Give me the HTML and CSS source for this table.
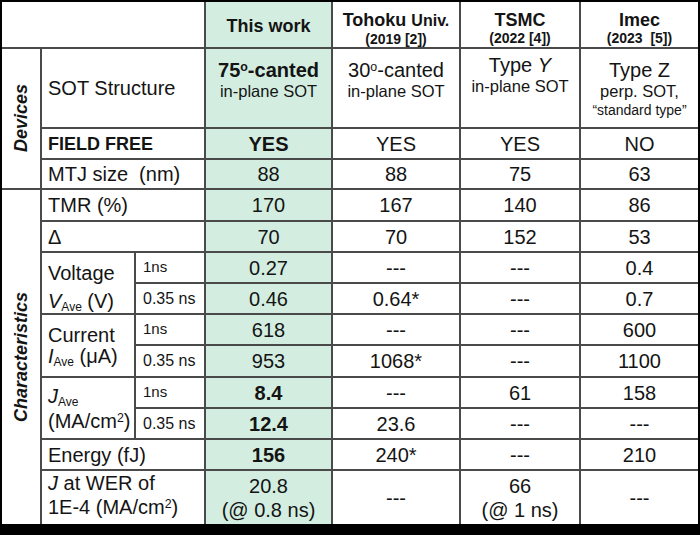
FILE: index.html
```html
<!DOCTYPE html>
<html>
<head>
<meta charset="utf-8">
<link rel="stylesheet" href="styles.css">
</head>
<body>
<div class="grid">
  <div class="c hdr-empty"></div>
  <div class="c g hdr-main">This work</div>
  <div class="c hdr"><div class="h1">Tohoku <span class="univ">Univ.</span></div><div class="h2">(2019 [2])</div></div>
  <div class="c hdr"><div class="h1">TSMC</div><div class="h2">(2022 [4])</div></div>
  <div class="c hdr"><div class="h1">Imec</div><div class="h2">(2023&nbsp; [5])</div></div>

  <div class="c rot rot-dev"><span>Devices</span></div>
  <div class="c lab span2">SOT Structure</div>
  <div class="c g top"><div class="l20 b">75<span class="sup">o</span>-canted</div><div class="l16">in-plane SOT</div></div>
  <div class="c top"><div class="l20">30<span class="sup">o</span>-canted</div><div class="l16">in-plane SOT</div></div>
  <div class="c top top-tsmc"><div class="l20">Type <i>Y</i></div><div class="l16">in-plane SOT</div></div>
  <div class="c top"><div class="l20">Type Z</div><div class="l16">perp. SOT,</div><div class="l13">“standard type”</div></div>

  <div class="c lab span2 b ff">FIELD FREE</div>
  <div class="c g b">YES</div>
  <div class="c">YES</div>
  <div class="c">YES</div>
  <div class="c">NO</div>

  <div class="c lab span2">MTJ size&nbsp; (nm)</div>
  <div class="c g">88</div>
  <div class="c">88</div>
  <div class="c">75</div>
  <div class="c">63</div>

  <div class="c rot rot-char"><span>Characteristics</span></div>
  <div class="c lab span2">TMR (%)</div>
  <div class="c g">170</div>
  <div class="c">167</div>
  <div class="c">140</div>
  <div class="c">86</div>

  <div class="c lab span2">Δ</div>
  <div class="c g">70</div>
  <div class="c">70</div>
  <div class="c">152</div>
  <div class="c">53</div>

  <div class="c lab rspan2 multi volt"><div>Voltage</div><div><i>V</i><span class="sub">Ave</span> (V)</div></div>
  <div class="c sc sc1">1ns</div>
  <div class="c g">0.27</div>
  <div class="c">---</div>
  <div class="c">---</div>
  <div class="c">0.4</div>

  <div class="c sc">0.35 ns</div>
  <div class="c g">0.46</div>
  <div class="c">0.64*</div>
  <div class="c">---</div>
  <div class="c">0.7</div>

  <div class="c lab rspan2 multi curr"><div>Current</div><div><i>I</i><span class="sub">Ave</span> (μA)</div></div>
  <div class="c sc sc1">1ns</div>
  <div class="c g">618</div>
  <div class="c">---</div>
  <div class="c">---</div>
  <div class="c">600</div>

  <div class="c sc">0.35 ns</div>
  <div class="c g">953</div>
  <div class="c">1068*</div>
  <div class="c">---</div>
  <div class="c">1100</div>

  <div class="c lab rspan2 multi jave"><div><i>J</i><span class="sub">Ave</span></div><div>(MA/cm<span class="sup">2</span>)</div></div>
  <div class="c sc sc1">1ns</div>
  <div class="c g b">8.4</div>
  <div class="c">---</div>
  <div class="c">61</div>
  <div class="c">158</div>

  <div class="c sc">0.35 ns</div>
  <div class="c g b">12.4</div>
  <div class="c">23.6</div>
  <div class="c">---</div>
  <div class="c">---</div>

  <div class="c lab span2">Energy (fJ)</div>
  <div class="c g b">156</div>
  <div class="c">240*</div>
  <div class="c">---</div>
  <div class="c">210</div>

  <div class="c lab span2 multi wer"><div><i>J</i> at WER of</div><div>1E-4 (MA/cm<span class="sup">2</span>)</div></div>
  <div class="c g multi wer"><div>20.8</div><div>(@ 0.8 ns)</div></div>
  <div class="c">---</div>
  <div class="c multi wer"><div>66</div><div>(@ 1 ns)</div></div>
  <div class="c">---</div>
</div>
</body>
</html>
```

FILE: styles.css
```css
html, body {
  margin: 0;
  padding: 0;
  background: #000;
}
body {
  width: 700px;
  height: 535px;
  overflow: hidden;
  font-family: "Liberation Sans", Arial, sans-serif;
  color: #141414;
}
.grid {
  display: grid;
  grid-template-columns: 38px 92px 68px 125px 126px 118px 117px;
  grid-template-rows: 45px 78px 29px 28px 30px 29px 29px 29px 29px 30px 29px 29px 29px 53px;
  gap: 2px;
  background: #4a4a4a;
  margin: 2px 2px 0 2px;
  width: 696px;
}
.c {
  background: #fff;
  display: flex;
  align-items: center;
  justify-content: center;
  font-size: 20px;
  line-height: 22px;
  white-space: nowrap;
  overflow: hidden;
}
.g { background: #d3eee0; }
.b { font-weight: bold; }
.hdr-empty { grid-column: span 3; }
.hdr-main {
  font-weight: bold;
  font-size: 18px;
  padding-top: 3px;
  box-sizing: border-box;
}
.hdr {
  flex-direction: column;
  justify-content: flex-start;
  padding-top: 8px;
  box-sizing: border-box;
  font-weight: bold;
}
.h1 { font-size: 18px; line-height: 20px; }
.univ { font-size: 16px; }
.h2 { font-size: 14px; line-height: 17px; }

.rot { grid-row: span 3; }
.rot-char { grid-row: span 10; }
.rot span {
  writing-mode: vertical-rl;
  transform: rotate(180deg);
  font-weight: bold;
  font-style: italic;
  font-size: 18px;
  line-height: 20px;
}
.lab {
  justify-content: flex-start;
  padding-left: 6px;
}
.span2 { grid-column: span 2; }
.rspan2 { grid-row: span 2; }
.ff { font-size: 18px; }
.top {
  flex-direction: column;
  justify-content: flex-start;
  padding-top: 10px;
  box-sizing: border-box;
}
.top-tsmc { padding-top: 5px; }
.l20 { font-size: 20px; line-height: 22px; }
.l16 { font-size: 16.5px; line-height: 20px; }
.l13 { font-size: 14px; line-height: 19px; }
.sup {
  font-size: 0.62em;
  vertical-align: 0.5em;
  line-height: 0;
}
.sub {
  font-size: 0.6em;
  vertical-align: -0.25em;
  line-height: 0;
}
.multi {
  flex-direction: column;
}
.lab.multi { align-items: flex-start; }
.volt {
  justify-content: flex-start;
  line-height: 28px;
  padding-top: 6px;
  box-sizing: border-box;
}
.curr {
  justify-content: flex-start;
  line-height: 21px;
  padding-top: 10px;
  box-sizing: border-box;
}
.jave {
  justify-content: flex-start;
  line-height: 25px;
  padding-top: 6px;
  box-sizing: border-box;
}
.wer { line-height: 24px; }
.sc {
  justify-content: flex-start;
  padding-left: 7px;
  font-size: 16px;
}
.sc1 {
  font-size: 15px;
  padding-bottom: 2px;
  box-sizing: border-box;
}
```
